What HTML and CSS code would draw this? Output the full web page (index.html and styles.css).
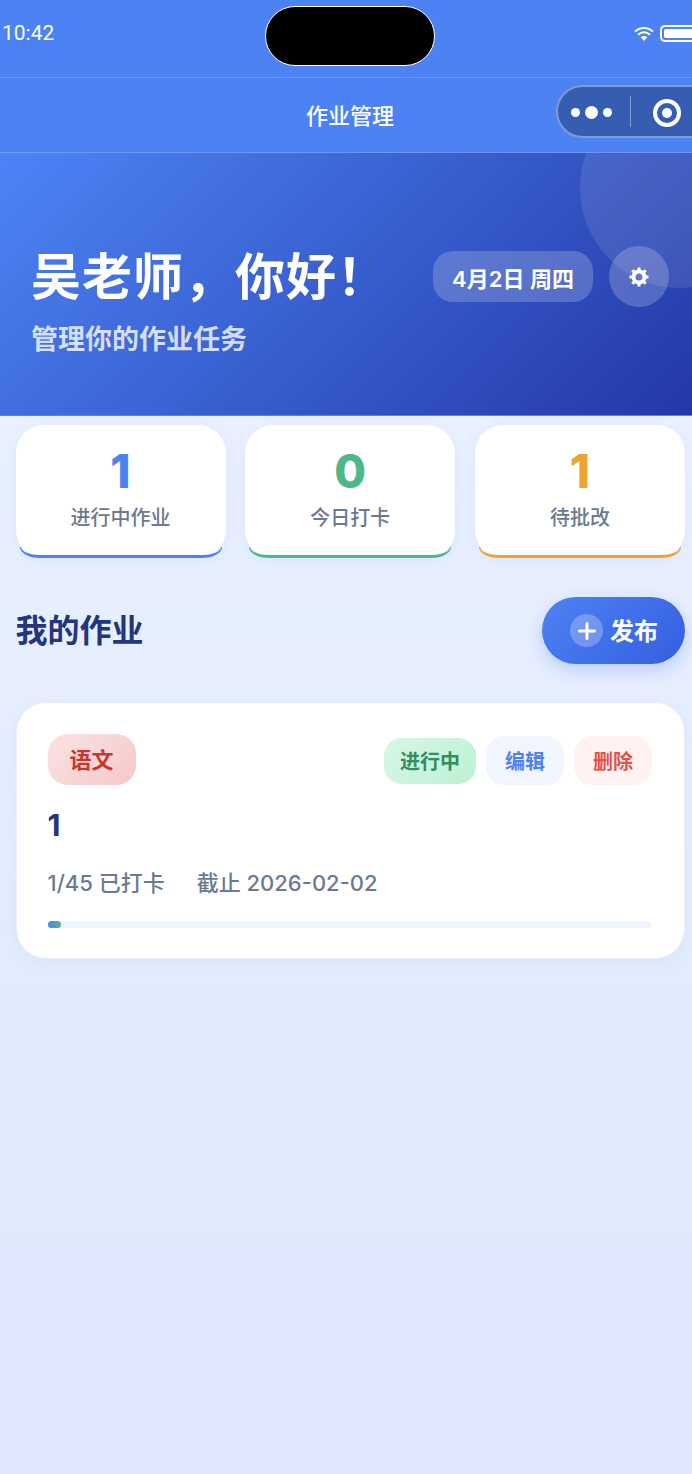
FILE: index.html
```html
<!DOCTYPE html>
<html lang="zh-CN">

<head>
    <meta charset="UTF-8">
    <meta name="viewport" content="width=device-width, initial-scale=1.0">
    <title>作业管理</title>
    <link rel="stylesheet" href="styles.css">
</head>

<body>
    <!-- Status bar -->
    <div class="status-bar">
        <span class="status-time">10:42</span>
        <div class="island"></div>
        <div class="status-icons">
            <svg class="wifi-icon" width="20" height="16" viewBox="0 0 20 16">
                <path d="M1 5.6a12.8 12.8 0 0 1 18 0M4 8.8a8.4 8.4 0 0 1 12 0" fill="none" stroke="#fff" stroke-width="2"/>
                <path d="M6.7 11.3a4.6 4.6 0 0 1 6.6 0L10 15z" fill="#fff"/>
            </svg>
            <div class="battery"><div class="battery-fill"></div></div>
        </div>
    </div>

    <!-- Nav bar -->
    <div class="nav-bar">
        <span class="nav-title">作业管理</span>
        <div class="capsule">
            <div class="capsule-dots">
                <span class="dot"></span>
                <span class="dot dot-big"></span>
                <span class="dot"></span>
            </div>
            <div class="capsule-line"></div>
            <div class="capsule-target"><span></span></div>
        </div>
    </div>

    <!-- Hero -->
    <div class="hero">
        <div class="hero-circle"></div>
        <div class="hero-text">
            <h1>吴老师&#65292;你好&#65281;</h1>
            <p>管理你的作业任务</p>
        </div>
        <div class="hero-side">
            <div class="date-chip">4月2日 周四</div>
            <div class="gear-btn">
                <svg width="22" height="22" viewBox="0 0 22 22">
                    <circle cx="11" cy="11" r="5.5" fill="none" stroke="#fff" stroke-width="4"/>
                    <path d="M11 1.5v3M11 17.5v3M1.5 11h3M17.5 11h3M4.3 4.3l2.2 2.2M15.5 15.5l2.2 2.2M4.3 17.7l2.2-2.2M15.5 6.5l2.2-2.2" stroke="#fff" stroke-width="3"/>
                </svg>
            </div>
        </div>
    </div>

    <div class="content">
        <!-- Stats -->
        <div class="stats">
            <div class="stat-card stat-blue">
                <div class="stat-num">1</div>
                <div class="stat-label">进行中作业</div>
            </div>
            <div class="stat-card stat-green">
                <div class="stat-num">0</div>
                <div class="stat-label">今日打卡</div>
            </div>
            <div class="stat-card stat-orange">
                <div class="stat-num">1</div>
                <div class="stat-label">待批改</div>
            </div>
        </div>

        <!-- Section heading -->
        <div class="section-head">
            <h2>我的作业</h2>
            <div class="publish-btn">
                <span class="plus">
                    <svg width="18" height="18" viewBox="0 0 18 18">
                        <path d="M9 1.5v15M1.5 9h15" stroke="#fff" stroke-width="3" stroke-linecap="round"/>
                    </svg>
                </span>
                <span class="publish-text">发布</span>
            </div>
        </div>

        <!-- Homework card -->
        <div class="work-card">
            <div class="work-top">
                <span class="subject-tag">语文</span>
                <div class="work-actions">
                    <span class="status-tag">进行中</span>
                    <span class="action-btn action-edit">编辑</span>
                    <span class="action-btn action-del">删除</span>
                </div>
            </div>
            <div class="work-title">1</div>
            <div class="work-meta">
                <span>1/45 已打卡</span>
                <span>截止 2026-02-02</span>
            </div>
            <div class="progress">
                <div class="progress-fill" style="width: 2.3%"></div>
            </div>
        </div>
    </div>
</body>

</html>
```

FILE: styles.css
```css
body {
    margin: 0;
    min-height: 1474px;
    overflow-x: hidden;
    font-family: 'Inter', 'Noto Sans CJK SC', sans-serif;
    background: linear-gradient(180deg, #eef4ff 0%, #dde8fd 100%);
}

.status-bar {
    position: relative;
    height: 77px;
    background-color: #4c82f3;
    border-bottom: 1px solid #6a98f6;
    display: flex;
    justify-content: space-between;
    color: #fff;
}

.status-time {
    margin: 21px 0 0 2px;
    font-family: 'Roboto', sans-serif;
    font-size: 21px;
    line-height: 24px;
}

.island {
    position: absolute;
    left: 265px;
    top: 6px;
    width: 168px;
    height: 58px;
    background-color: #000;
    border: 1px solid #fff;
    border-radius: 30px;
}

.status-icons {
    display: flex;
    align-items: flex-start;
    gap: 6px;
    margin-right: -24px;
    padding-top: 25px;
}

.wifi-icon {
    margin-top: 1px;
}

.battery {
    width: 56px;
    height: 17px;
    box-sizing: border-box;
    padding: 2px;
    border: 2px solid #fff;
    border-radius: 5px;
}

.battery-fill {
    height: 100%;
    background-color: #fff;
    border-radius: 2px;
}

.nav-bar {
    height: 74px;
    background-color: #4c82f3;
    border-bottom: 1px solid #6a98f6;
    display: flex;
    align-items: center;
    justify-content: flex-end;
    position: relative;
    color: #fff;
}

.nav-title {
    position: absolute;
    left: 0;
    width: 700px;
    padding-bottom: 2px;
    text-align: center;
    font-size: 22px;
    font-weight: 500;
}

.capsule {
    display: flex;
    align-items: center;
    width: 170px;
    height: 53px;
    box-sizing: border-box;
    margin-right: -34px;
    margin-top: -7px;
    padding-left: 13px;
    background-color: #365eb0;
    border: 2px solid #7f9bd0;
    border-radius: 27px;
}

.capsule-dots {
    display: flex;
    align-items: center;
    gap: 5px;
    margin-top: 2px;
}

.dot {
    width: 9px;
    height: 9px;
    border-radius: 50%;
    background-color: #fff;
}

.dot-big {
    width: 13px;
    height: 13px;
}

.capsule-line {
    width: 1px;
    height: 31px;
    margin-left: 18px;
    background-color: #7f9bd0;
}

.capsule-target {
    display: flex;
    align-items: center;
    justify-content: center;
    width: 28px;
    height: 28px;
    box-sizing: border-box;
    margin-left: 22px;
    margin-top: 2px;
    border: 4px solid #fff;
    border-radius: 50%;
}

.capsule-target span {
    width: 10px;
    height: 10px;
    border-radius: 50%;
    background-color: #fff;
}

.hero {
    position: relative;
    overflow: hidden;
    height: 263px;
    box-sizing: border-box;
    padding: 93px 23px 0 31px;
    display: flex;
    justify-content: space-between;
    background: linear-gradient(135deg, #4d84f5 0%, #2338a6 100%);
    border-bottom: 1px solid #5a83e0;
}

.hero-circle {
    position: absolute;
    left: 580px;
    top: -65px;
    width: 200px;
    height: 200px;
    border-radius: 50%;
    background-color: rgba(255, 255, 255, 0.1);
}

.hero-text {
    position: relative;
}

.hero-text h1 {
    margin: 0;
    font-size: 50px;
    line-height: 62px;
    font-weight: 700;
    letter-spacing: 1px;
    color: #fff;
}

.hero-text p {
    margin: 14px 0 0;
    font-size: 27px;
    line-height: 36px;
    font-weight: 600;
    color: rgba(255, 255, 255, 0.78);
}

.hero-side {
    position: relative;
    display: flex;
    align-items: center;
    gap: 16px;
    height: 61px;
}

.date-chip {
    width: 160px;
    height: 51px;
    display: flex;
    align-items: center;
    justify-content: center;
    border-radius: 20px;
    background-color: rgba(255, 255, 255, 0.2);
    color: #fff;
    font-size: 22px;
    font-weight: 600;
}

.gear-btn {
    width: 60px;
    height: 61px;
    display: flex;
    align-items: center;
    justify-content: center;
    border-radius: 50%;
    background-color: rgba(255, 255, 255, 0.2);
}

.content {
    padding: 9px 7px 0 15.5px;
}

.stats {
    display: flex;
    justify-content: space-between;
}

.stat-card {
    position: relative;
    width: 210px;
    height: 133px;
    box-sizing: border-box;
    padding-top: 20px;
    text-align: center;
    background-color: #fff;
    border-radius: 28px;
    box-shadow: 0 4px 16px rgba(77, 130, 243, 0.08);
}

/* coloured line along the bottom edge, curls up at the ends */
.stat-card::after {
    content: '';
    position: absolute;
    left: 4px;
    right: 4px;
    bottom: 0;
    height: 11px;
    box-sizing: border-box;
    border: 1.5px solid #4d82f3;
    border-top: none;
    border-bottom-width: 3.5px;
    border-radius: 0 0 20px 20px / 0 0 11px 11px;
}

.stat-num {
    font-size: 46px;
    line-height: 52px;
    font-weight: 800;
}

.stat-label {
    margin-top: 7px;
    font-size: 20px;
    line-height: 28px;
    font-weight: 500;
    color: #6c7a91;
}

.stat-blue .stat-num {
    color: #4d82f3;
}

.stat-green::after {
    border-color: #50b888;
}

.stat-green .stat-num {
    color: #50b888;
}

.stat-orange::after {
    border-color: #eba42f;
}

.stat-orange .stat-num {
    color: #eba42f;
}

.section-head {
    display: flex;
    align-items: center;
    justify-content: space-between;
    margin-top: 39px;
}

.section-head h2 {
    margin: 0;
    font-size: 32px;
    line-height: 44px;
    font-weight: 700;
    color: #23357f;
}

.publish-btn {
    display: flex;
    align-items: center;
    gap: 7px;
    width: 143px;
    height: 67px;
    box-sizing: border-box;
    padding-left: 28px;
    border-radius: 34px;
    background: linear-gradient(135deg, #4d82f3 0%, #345fe0 100%);
    box-shadow: 0 6px 18px rgba(77, 130, 243, 0.3);
    color: #fff;
    font-size: 24px;
    font-weight: 700;
}

.publish-text {
    margin-bottom: 2px;
}

.plus {
    display: flex;
    align-items: center;
    justify-content: center;
    width: 33px;
    height: 33px;
    border-radius: 50%;
    background-color: rgba(255, 255, 255, 0.25);
}

.work-card {
    height: 257px;
    box-sizing: border-box;
    margin-top: 38px;
    padding: 31px 32px 0 31px;
    background-color: #fff;
    border: 1px solid #e6eefc;
    border-radius: 30px;
    box-shadow: 0 4px 16px rgba(77, 130, 243, 0.07);
}

.work-top {
    display: flex;
    align-items: center;
    justify-content: space-between;
}

.subject-tag {
    width: 88px;
    height: 51px;
    box-sizing: border-box;
    padding-bottom: 4px;
    display: flex;
    align-items: center;
    justify-content: center;
    border-radius: 20px;
    background: linear-gradient(135deg, #fbe3e3 0%, #f5c8c8 100%);
    color: #c9372c;
    font-size: 22px;
    font-weight: 700;
}

.work-actions {
    display: flex;
    align-items: center;
    gap: 10px;
    margin-top: 2px;
}

.status-tag {
    width: 92px;
    height: 46px;
    display: flex;
    align-items: center;
    justify-content: center;
    border-radius: 18px;
    background: linear-gradient(135deg, #d6f7e5 0%, #bdf1d4 100%);
    color: #2f8f5f;
    font-size: 20px;
    font-weight: 700;
}

.action-btn {
    width: 78px;
    height: 49px;
    display: flex;
    align-items: center;
    justify-content: center;
    border-radius: 18px;
    font-size: 20px;
    font-weight: 700;
}

.action-edit {
    background-color: #f0f5ff;
    color: #4d82f3;
}

.action-del {
    background-color: #fff2f1;
    color: #e0524d;
}

.work-title {
    margin-top: 20px;
    font-size: 30px;
    line-height: 40px;
    font-weight: 700;
    color: #23357f;
}

.work-meta {
    display: flex;
    gap: 32px;
    margin-top: 23px;
    font-size: 22px;
    line-height: 30px;
    font-weight: 500;
    color: #6c7a91;
}

.progress {
    height: 7px;
    margin-top: 23px;
    border-radius: 4px;
    background-color: #f0f5ff;
}

.progress-fill {
    height: 100%;
    border-radius: 4px;
    background: linear-gradient(90deg, #4d82f3 0%, #50b888 100%);
}
```
